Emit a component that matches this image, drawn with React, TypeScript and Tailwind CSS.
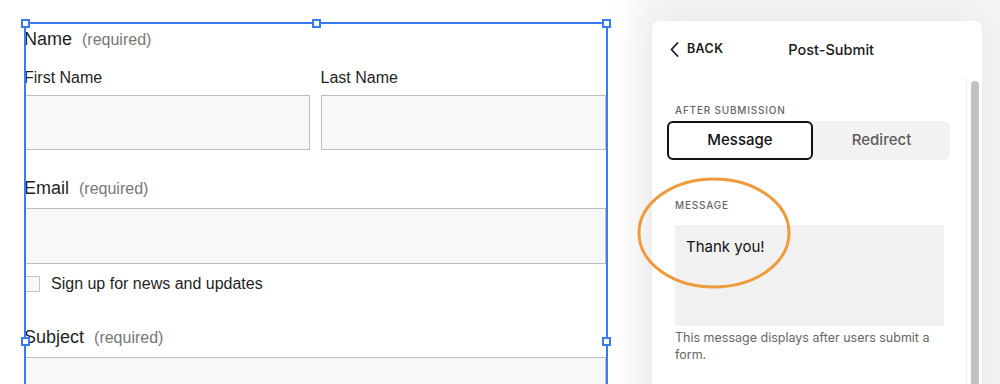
import React from 'react';

// Selection handle drawn on the blue frame around the form block
const Handle = ({ className }: { className: string }) => (
    <div className={`absolute w-[9px] h-[9px] bg-white border-2 border-[#3b7bf2] ${className}`} />
);

const Field = ({ label, required }: { label: string; required?: boolean }) => (
    <div className="flex items-baseline h-[22px] leading-[22px]">
        <span className="text-[18px] text-[#1f1f1f]">{label}</span>
        {required && <span className="ml-[10px] text-[16px] text-[#777]">(required)</span>}
    </div>
);

const App = () => {
    return (
        <div className="w-[1000px] h-[384px] overflow-hidden flex bg-white relative">
            {/* Form preview */}
            <div className="w-[612px] shrink-0 relative pl-[24px] pt-[28px] bg-white" style={{ fontFamily: '"Liberation Sans", Arial, sans-serif' }}>
                <div className="w-[582px]">
                    <Field label="Name" required />
                    <div className="grid grid-cols-2 gap-x-[11px] mt-[18px]">
                        <div>
                            <div className="h-[20px] leading-[20px] text-[16px] text-[#1f1f1f]">First Name</div>
                            <div className="mt-[7px] h-[55px] border border-[#bdbdbd] bg-[#f8f8f8]" />
                        </div>
                        <div>
                            <div className="h-[20px] leading-[20px] text-[16px] text-[#1f1f1f]">Last Name</div>
                            <div className="mt-[7px] h-[55px] border border-[#bdbdbd] bg-[#f8f8f8]" />
                        </div>
                    </div>
                    <div className="mt-[27px]">
                        <Field label="Email" required />
                    </div>
                    <div className="mt-[9px] h-[56px] border border-[#bdbdbd] bg-[#f8f8f8]" />
                    <div className="mt-[12px] flex items-center h-[16px]">
                        <div className="w-[16px] h-[16px] border border-[#c4c4c4] bg-[#f8f8f8]" />
                        <span className="ml-[11px] text-[16px] text-[#1f1f1f]">Sign up for news and updates</span>
                    </div>
                    <div className="mt-[34px]">
                        <Field label="Subject" required />
                    </div>
                    <div className="mt-[9px] h-[55px] border border-[#bdbdbd] bg-[#f8f8f8]" />
                </div>

                {/* Selection frame */}
                <div className="absolute left-[24px] top-[22px] w-[584px] h-[400px] border-2 border-[#3b7bf2] pointer-events-none">
                    <Handle className="-left-[5px] -top-[5px]" />
                    <Handle className="left-[286px] -top-[5px]" />
                    <Handle className="-right-[5px] -top-[5px]" />
                    <Handle className="-left-[5px] top-[313px]" />
                    <Handle className="-right-[5px] top-[313px]" />
                </div>
            </div>

            {/* Settings side */}
            <div className="flex-1 bg-[linear-gradient(to_right,#ffffff,#f4f4f4_40px)] pl-[40px] pt-[21px] relative" style={{ fontFamily: 'Inter, "Noto Sans", sans-serif' }}>
                <div className="w-[330px] h-[400px] bg-white rounded-[8px] shadow-[0_0_40px_rgba(0,0,0,0.05)] flex flex-col">
                    <div className="h-[57px] flex items-center pl-[18px] shrink-0">
                        <svg width="9" height="15" viewBox="0 0 9 15" fill="none" stroke="#1a1a1a" strokeWidth="1.8" strokeLinecap="round" strokeLinejoin="round">
                            <path d="M7.5 1 1.5 7.5 7.5 14" />
                        </svg>
                        <span className="ml-[8px] text-[12.5px] font-semibold tracking-[0.03em] text-[#1a1a1a]">BACK</span>
                        <span className="ml-[65px] text-[14.5px] font-medium text-[#1a1a1a]">Post-Submit</span>
                    </div>
                    <div className="flex flex-1">
                        <div className="w-[314px] pl-[15px] pt-[24px]">
                            <div className="pl-[8px] text-[10px] font-medium tracking-[0.08em] text-[#666] leading-[16px]">AFTER SUBMISSION</div>
                            <div className="mt-[3px] w-[283px] h-[39px] bg-[#f2f2f2] rounded-[6px] flex">
                                <div className="w-[146px] h-full border-2 border-[#111] rounded-[6px] bg-white flex items-center justify-center text-[15px] font-medium text-[#111]">Message</div>
                                <div className="flex-1 flex items-center justify-center text-[15px] font-medium text-[#5c5c5c]">Redirect</div>
                            </div>
                            <div className="pl-[8px] mt-[37px] text-[10px] font-medium tracking-[0.08em] text-[#666] leading-[16px]">MESSAGE</div>
                            <div className="ml-[8px] mt-[12px] w-[269px] h-[101px] bg-[#f1f1f1] pl-[11px] pt-[12px] text-[15px] text-[#111] leading-[20px]">Thank you!</div>
                            <p className="ml-[8px] mt-[3px] w-[269px] text-[12.5px] leading-[17px] text-[#666]">This message displays after users submit a form.</p>
                        </div>
                        {/* Scrollbar */}
                        <div className="w-[14px] border-l border-[#ececec] pl-[4px] pt-[3px]">
                            <div className="w-[8px] h-[400px] rounded-full bg-[#c2c2c2]" />
                        </div>
                    </div>
                </div>

                {/* Annotation ellipse */}
                <svg className="absolute left-[24px] top-[175px] pointer-events-none" width="156" height="116" viewBox="0 0 156 116" fill="none">
                    <ellipse cx="78" cy="58" rx="75" ry="54" stroke="#ee9b3c" strokeWidth="3" />
                </svg>
            </div>
        </div>
    );
};

export default App;
